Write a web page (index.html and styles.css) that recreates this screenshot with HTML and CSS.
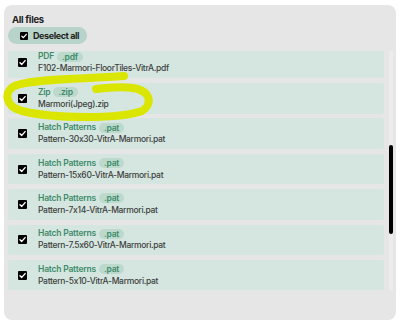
FILE: index.html
```html
<!DOCTYPE html>
<html lang="en">
<head>
    <meta charset="UTF-8">
    <meta name="viewport" content="width=device-width, initial-scale=1.0">
    <title>All files</title>
    <link rel="stylesheet" href="styles.css">
</head>
<body>
    <div class="panel">
        <h3 class="panel-title">All files</h3>
        <button class="deselect" type="button">
            <span class="check small"><svg viewBox="0 0 10 10"><path d="M2.2 5.2 L4.2 7.1 L7.9 2.9" /></svg></span>
            Deselect all
        </button>

        <div class="files">
            <div class="file-list">
                <div class="file first">
                    <span class="check"><svg viewBox="0 0 10 10"><path d="M2.2 5.2 L4.2 7.1 L7.9 2.9" /></svg></span>
                    <div class="file-info">
                        <div class="file-type">PDF <span class="ext">.pdf</span></div>
                        <div class="file-name">F102-Marmori-FloorTiles-VitrA.pdf</div>
                    </div>
                </div>
                <div class="file">
                    <span class="check"><svg viewBox="0 0 10 10"><path d="M2.2 5.2 L4.2 7.1 L7.9 2.9" /></svg></span>
                    <div class="file-info">
                        <div class="file-type">Zip <span class="ext">.zip</span></div>
                        <div class="file-name">Marmori(Jpeg).zip</div>
                    </div>
                </div>
                <div class="file">
                    <span class="check"><svg viewBox="0 0 10 10"><path d="M2.2 5.2 L4.2 7.1 L7.9 2.9" /></svg></span>
                    <div class="file-info">
                        <div class="file-type">Hatch Patterns <span class="ext">.pat</span></div>
                        <div class="file-name">Pattern-30x30-VitrA-Marmori.pat</div>
                    </div>
                </div>
                <div class="file">
                    <span class="check"><svg viewBox="0 0 10 10"><path d="M2.2 5.2 L4.2 7.1 L7.9 2.9" /></svg></span>
                    <div class="file-info">
                        <div class="file-type">Hatch Patterns <span class="ext">.pat</span></div>
                        <div class="file-name">Pattern-15x60-VitrA-Marmori.pat</div>
                    </div>
                </div>
                <div class="file">
                    <span class="check"><svg viewBox="0 0 10 10"><path d="M2.2 5.2 L4.2 7.1 L7.9 2.9" /></svg></span>
                    <div class="file-info">
                        <div class="file-type">Hatch Patterns <span class="ext">.pat</span></div>
                        <div class="file-name">Pattern-7x14-VitrA-Marmori.pat</div>
                    </div>
                </div>
                <div class="file">
                    <span class="check"><svg viewBox="0 0 10 10"><path d="M2.2 5.2 L4.2 7.1 L7.9 2.9" /></svg></span>
                    <div class="file-info">
                        <div class="file-type">Hatch Patterns <span class="ext">.pat</span></div>
                        <div class="file-name">Pattern-7.5x60-VitrA-Marmori.pat</div>
                    </div>
                </div>
                <div class="file">
                    <span class="check"><svg viewBox="0 0 10 10"><path d="M2.2 5.2 L4.2 7.1 L7.9 2.9" /></svg></span>
                    <div class="file-info">
                        <div class="file-type">Hatch Patterns <span class="ext">.pat</span></div>
                        <div class="file-name">Pattern-5x10-VitrA-Marmori.pat</div>
                    </div>
                </div>
            </div>
            <div class="scrollbar">
                <div class="thumb"></div>
            </div>
        </div>
    </div>

    <!-- hand-drawn highlight around the zip entry -->
    <svg class="scribble" viewBox="0 0 400 325" width="400" height="325">
        <path d="M124 76 C 90 79, 40 78, 17 85 C 3 90, 4 106, 22 111 C 55 119, 120 119, 142 111 C 153 104, 151 91, 133 88 C 120 86, 108 88, 96 89" />
    </svg>
</body>
</html>
```

FILE: styles.css
```css
body {
    margin: 0;
    background: #fff;
    font-family: Inter, "Noto Sans", sans-serif;
    font-feature-settings: "calt" 0;
    width: 400px;
    height: 325px;
    overflow: hidden;
}
.panel {
    margin: 5px 4px;
    height: 315px;
    box-sizing: border-box;
    background: #e6e6e6;
    border-radius: 8px;
    padding: 8px 3px 0 4px;
}
.panel-title {
    margin: 0 0 0 4px;
    font-size: 9.5px;
    font-weight: 700;
    letter-spacing: -0.3px;
    line-height: 13px;
    color: #1f1f1f;
}
.deselect {
    display: flex;
    align-items: center;
    gap: 5px;
    margin-top: 1px;
    height: 17px;
    padding: 0 8px 0 12px;
    border: none;
    border-radius: 9px;
    background: #b8d3c9;
    font-family: inherit;
    font-feature-settings: "calt" 0;
    font-size: 9px;
    font-weight: 700;
    letter-spacing: -0.4px;
    color: #1f1f1f;
}
.check {
    display: flex;
    width: 9px;
    height: 9px;
    background: #000;
    border-radius: 1px;
    flex-shrink: 0;
}
.check.small {
    width: 8px;
    height: 8px;
}
.check svg {
    width: 100%;
    height: 100%;
}
.check path {
    fill: none;
    stroke: #fff;
    stroke-width: 1.6;
    stroke-linecap: round;
    stroke-linejoin: round;
}
.files {
    display: flex;
    gap: 5px;
    margin-top: 7px;
    height: 239px;
}
.file-list {
    flex: 1;
    overflow: hidden;
    display: flex;
    flex-direction: column;
    gap: 4.9px;
}
.file {
    display: flex;
    align-items: center;
    gap: 11px;
    height: 30.5px;
    flex-shrink: 0;
    padding-left: 10px;
    box-sizing: border-box;
    background: #d4e6df;
    border-radius: 3px;
}
.file.first {
    margin-top: -3.4px;
}
.file-info {
    display: flex;
    flex-direction: column;
    gap: 1px;
}
.file-type {
    display: flex;
    align-items: center;
    gap: 3px;
    font-size: 8.5px;
    font-weight: 600;
    letter-spacing: -0.2px;
    line-height: 11px;
    color: #3e8b6b;
}
.ext {
    padding: 0 5px;
    background: #bcd9cc;
    border-radius: 5px;
    line-height: 10px;
}
.file-name {
    font-size: 8.5px;
    font-weight: 500;
    letter-spacing: -0.3px;
    line-height: 11px;
    color: #404040;
}
.scrollbar {
    width: 4px;
    background: #ececec;
}
.thumb {
    margin-top: 94px;
    height: 89px;
    background: #000;
    border-radius: 2px;
}
.scribble {
    position: absolute;
    top: 0;
    left: 0;
    pointer-events: none;
}
.scribble path {
    fill: none;
    stroke: #dbe600;
    stroke-width: 8;
    stroke-linecap: round;
    stroke-linejoin: round;
}
```
